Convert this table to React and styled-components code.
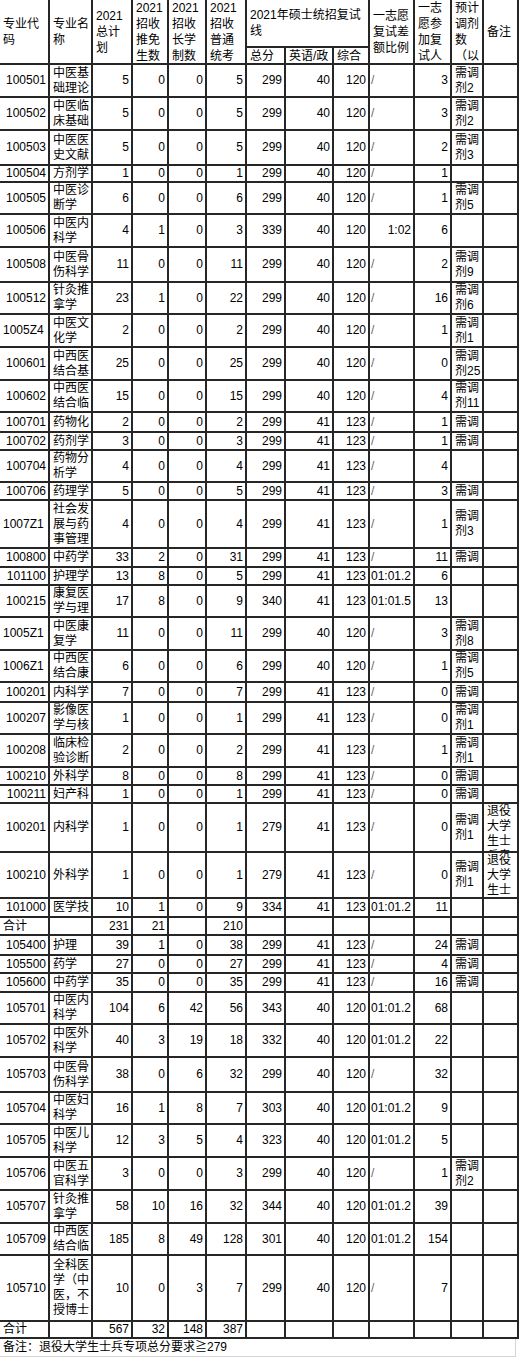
import React from "react";
import styled, { createGlobalStyle } from "styled-components";

const GlobalStyle = createGlobalStyle`
  html, body {
    margin: 0;
    padding: 0;
    background: #fff;
  }
  body {
    font-family: "Liberation Sans", "Noto Sans CJK SC", sans-serif;
    font-size: 12px;
    color: #000;
  }
`;

// column track widths (cell interior, 2px grid lines between)
const cols = [48, 41, 38, 34, 36, 38, 37, 46, 34, 43, 35, 30, 33];

// code, name, total, tuimian, changxue, putong, zongfen, eng, zonghe, ratio, fushi, tiaoji, beizhu, height
const rows = [
  ["100501", "中医基础理论", 5, 0, 0, 5, 299, 40, 120, "/", 3, "需调剂2", "", 33],
  ["100502", "中医临床基础", 5, 0, 0, 5, 299, 40, 120, "/", 3, "需调剂2", "", 33],
  ["100503", "中医医史文献", 5, 0, 0, 5, 299, 40, 120, "/", 2, "需调剂3", "", 35],
  ["100504", "方剂学", 1, 0, 0, 1, 299, 40, 120, "/", 1, "", "", 17],
  ["100505", "中医诊断学", 6, 0, 0, 6, 299, 40, 120, "/", 1, "需调剂5", "", 32],
  ["100506", "中医内科学", 4, 1, 0, 3, 339, 40, 120, "1:02", 6, "", "", 33],
  ["100508", "中医骨伤科学", 11, 0, 0, 11, 299, 40, 120, "/", 2, "需调剂9", "", 35],
  ["100512", "针灸推拿学", 23, 1, 0, 22, 299, 40, 120, "/", 16, "需调剂6", "", 32],
  ["1005Z4", "中医文化学", 2, 0, 0, 2, 299, 40, 120, "/", 1, "需调剂1", "", 33],
  ["100601", "中西医结合基础", 25, 0, 0, 25, 299, 40, 120, "/", 0, "需调剂25", "", 33],
  ["100602", "中西医结合临床", 15, 0, 0, 15, 299, 40, 120, "/", 4, "需调剂11", "", 32],
  ["100701", "药物化学", 2, 0, 0, 2, 299, 41, 123, "/", 1, "需调剂", "", 20],
  ["100702", "药剂学", 3, 0, 0, 3, 299, 41, 123, "/", 1, "需调剂", "", 18],
  ["100704", "药物分析学", 4, 0, 0, 4, 299, 41, 123, "/", 4, "", "", 32],
  ["100706", "药理学", 5, 0, 0, 5, 299, 41, 123, "/", 3, "需调剂", "", 18],
  ["1007Z1", "社会发展与药事管理", 4, 0, 0, 4, 299, 41, 123, "/", 1, "需调剂3", "", 48],
  ["100800", "中药学", 33, 2, 0, 31, 299, 41, 123, "/", 11, "需调剂", "", 19],
  ["101100", "护理学", 13, 8, 0, 5, 299, 41, 123, "01:01.2", 6, "", "", 18],
  ["100215", "康复医学与理疗学", 17, 8, 0, 9, 340, 41, 123, "01:01.5", 13, "", "", 32],
  ["1005Z1", "中医康复学", 11, 0, 0, 11, 299, 40, 120, "/", 3, "需调剂8", "", 33],
  ["1006Z1", "中西医结合康复学", 6, 0, 0, 6, 299, 40, 120, "/", 1, "需调剂5", "", 32],
  ["100201", "内科学", 7, 0, 0, 7, 299, 41, 123, "/", 0, "需调剂", "", 20],
  ["100207", "影像医学与核医学", 1, 0, 0, 1, 299, 41, 123, "/", 0, "需调剂1", "", 32],
  ["100208", "临床检验诊断学", 2, 0, 0, 2, 299, 41, 123, "/", 1, "需调剂1", "", 33],
  ["100210", "外科学", 8, 0, 0, 8, 299, 41, 123, "/", 0, "需调剂", "", 18],
  ["100211", "妇产科学", 1, 0, 0, 1, 299, 41, 123, "/", 0, "需调剂", "", 18],
  ["100201", "内科学", 1, 0, 0, 1, 279, 41, 123, "/", 0, "需调剂1", "退役大学生士兵专项", 49],
  ["100210", "外科学", 1, 0, 0, 1, 279, 41, 123, "/", 0, "需调剂1", "退役大学生士兵专项", 46],
  ["101000", "医学技术", 10, 1, 0, 9, 334, 41, 123, "01:01.2", 11, "", "", 19],
  ["合计", "", 231, 21, "", 210, "", "", "", "", "", "", "", 18],
  ["105400", "护理", 39, 1, 0, 38, 299, 41, 123, "/", 24, "需调剂", "", 20],
  ["105500", "药学", 27, 0, 0, 27, 299, 41, 123, "/", 4, "需调剂", "", 18],
  ["105600", "中药学", 35, 0, 0, 35, 299, 41, 123, "/", 16, "需调剂", "", 19],
  ["105701", "中医内科学", 104, 6, 42, 56, 343, 40, 120, "01:01.2", 68, "", "", 32],
  ["105702", "中医外科学", 40, 3, 19, 18, 332, 40, 120, "01:01.2", 22, "", "", 33],
  ["105703", "中医骨伤科学", 38, 0, 6, 32, 299, 40, 120, "/", 32, "", "", 35],
  ["105704", "中医妇科学", 16, 1, 8, 7, 303, 40, 120, "01:01.2", 9, "", "", 32],
  ["105705", "中医儿科学", 12, 3, 5, 4, 323, 40, 120, "01:01.2", 5, "", "", 33],
  ["105706", "中医五官科学", 3, 0, 0, 3, 299, 40, 120, "/", 1, "需调剂2", "", 33],
  ["105707", "针灸推拿学", 58, 10, 16, 32, 344, 40, 120, "01:01.2", 39, "", "", 33],
  ["105709", "中西医结合临床", 185, 8, 49, 128, 301, 40, 120, "01:01.2", 154, "", "", 32],
  ["105710", "全科医学（中医，不授博士）", 10, 0, 3, 7, 299, 40, 120, "/", 7, "", "", 66],
  ["合计", "", 567, 32, 148, 387, "", "", "", "", "", "", "", 17],
];

const LINE = 15;
const rowTemplate = ["46px", "15px", ...rows.map((r) => `${r[13] - 2}px`)].join(" ");

const Sheet = styled.div`
  display: grid;
  grid-template-columns: ${cols.map((c) => `${c}px`).join(" ")};
  grid-template-rows: ${(p) => p.$rows};
  gap: 2px;
  padding: 0 2px 2px 0;
  width: max-content;
  background: #262626;
`;

const Cell = styled.div`
  background: #fff;
  overflow: hidden;
  display: flex;
  flex-direction: column;
  justify-content: safe center;
  padding: ${(p) => (p.$align === "right" ? "0 2px 0 0" : "0 1px 0 3px")};
  line-height: ${LINE}px;
  text-align: ${(p) => p.$align || "left"};
  white-space: ${(p) => (p.$align === "right" ? "nowrap" : "normal")};
`;

const HeadCell = styled(Cell)`
  line-height: 16px;
  grid-row: ${(p) => (p.$tall ? "span 2" : "auto")};
  grid-column: ${(p) => (p.$wide ? `span ${p.$wide}` : "auto")};
`;

// wrapped text that Excel clips to the lines that fit in the row
const Text = styled.span`
  display: block;
  overflow: hidden;
  max-height: ${(p) => p.$max}px;
  line-break: anywhere;
`;

const Slash = styled.span`
  color: #6a6a6a;
  font-size: 12px;
  margin-left: -2px;
`;

const Note = styled.div`
  width: 512px;
  height: 17px;
  line-height: 17px;
  padding-left: 3px;
  border-bottom: 1px solid #d4d4d4;
  border-right: 1px solid #d4d4d4;
  white-space: nowrap;
`;

const heads = [
  "专业代码",
  "专业名称",
  "2021总计划",
  "2021招收推免生数",
  "2021招收长学制数",
  "2021招收普通统考",
];
const tails = ["一志愿复试差额比例", "一志愿参加复试人数", "预计调剂数（以下", "备注"];

function Row({ r }) {
  const [code, name, ...rest] = r;
  const nums = rest.slice(0, 7);
  const [ratio, fushi, tiaoji, beizhu, h] = rest.slice(7, 12);
  const max = Math.max(1, Math.floor((h - 2) / LINE)) * LINE;
  const codeAlign = /^\d{6}$/.test(code) ? "right" : "left";
  return (
    <>
      <Cell $align={codeAlign}>
        <span>{code}</span>
      </Cell>
      <Cell>
        <Text $max={max}>{name}</Text>
      </Cell>
      {nums.map((n, i) => (
        <Cell key={i} $align="right">
          <span>{n}</span>
        </Cell>
      ))}
      {ratio === "/" ? (
        <Cell>
          <Slash>/</Slash>
        </Cell>
      ) : (
        <Cell $align="right">
          <span>{ratio}</span>
        </Cell>
      )}
      <Cell $align="right">
        <span>{fushi}</span>
      </Cell>
      <Cell>
        <Text $max={max}>{tiaoji}</Text>
      </Cell>
      <Cell>
        <Text $max={max + LINE}>{beizhu}</Text>
      </Cell>
    </>
  );
}

export default function App() {
  return (
    <>
      <GlobalStyle />
      <Sheet $rows={rowTemplate}>
        {heads.map((h) => (
          <HeadCell key={h} $tall>
            <span>{h}</span>
          </HeadCell>
        ))}
        <HeadCell $wide={3}>
          <span>2021年硕士统招复试线</span>
        </HeadCell>
        {tails.map((h) => (
          <HeadCell key={h} $tall>
            <span>{h}</span>
          </HeadCell>
        ))}
        <HeadCell>
          <span>总分</span>
        </HeadCell>
        <HeadCell>
          <span>英语/政治</span>
        </HeadCell>
        <HeadCell>
          <span>综合</span>
        </HeadCell>
        {rows.map((r, i) => (
          <Row key={i} r={r} />
        ))}
      </Sheet>
      <Note>备注：退役大学生士兵专项总分要求≧279</Note>
    </>
  );
}
